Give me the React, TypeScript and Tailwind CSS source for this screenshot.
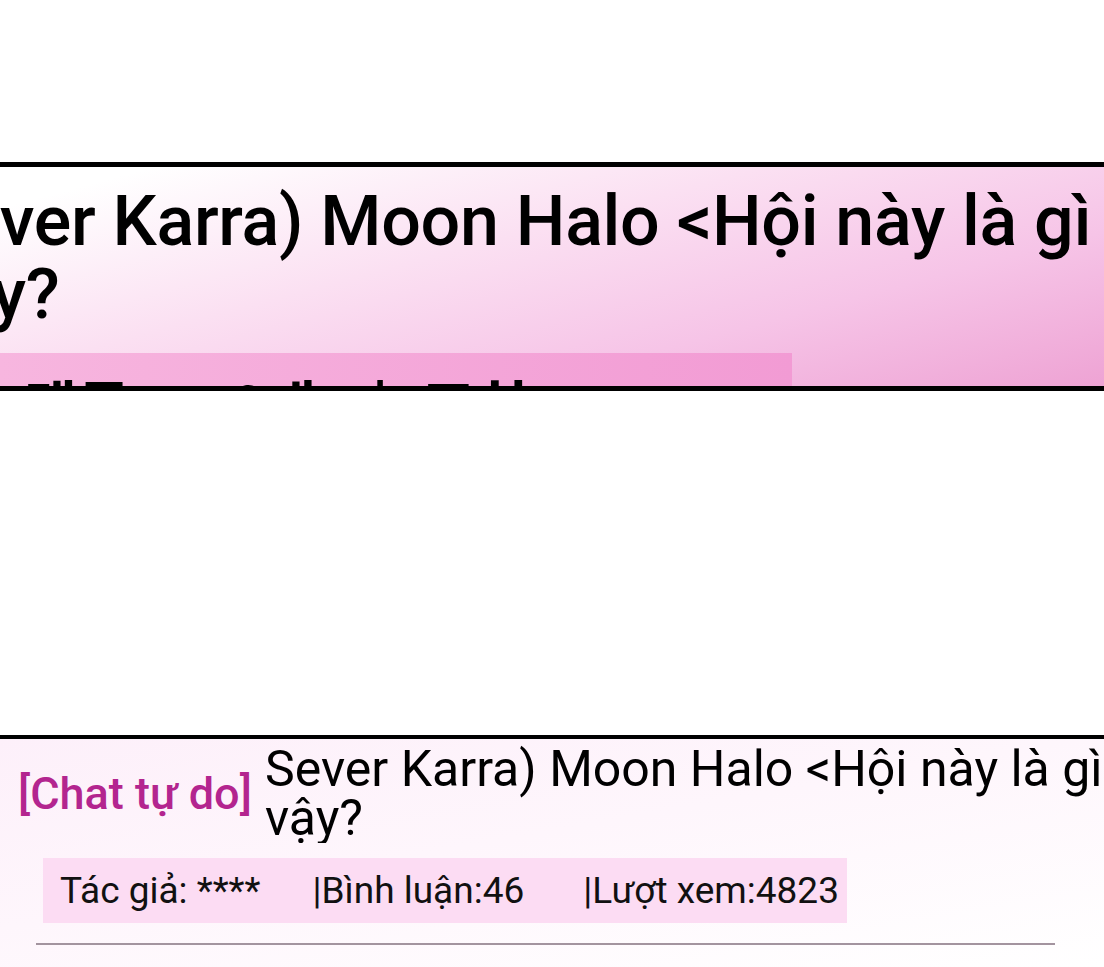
import React from 'react'

const stats = [
  { label: 'Tác giả: ****', className: '' },
  { label: '|Bình luận:46', className: 'ml-[52px]' },
  { label: '|Lượt xem:4823', className: 'ml-[59px]' },
]

const Banner: React.FC = () => (
  <div className="w-full overflow-hidden border-y-[5px] border-black bg-[linear-gradient(165deg,#ffffff_8%,#fbe0f2_40%,#f6c4e7_70%,#eea3d4_100%)]">
    <div className="h-[219px] flex flex-col">
      <div className="pt-[18px] ml-[-79px] w-[1215px] text-[70px] leading-[73px] font-medium tracking-[-0.3px] text-black">
        Sever Karra) Moon Halo &lt;Hội này là gì vậy?
      </div>
      {/* clipped korean row peeking under the title */}
      <div className="mt-auto h-[33px] w-[792px] overflow-hidden bg-[linear-gradient(90deg,#f7b6df,#f29bd4)]">
        <div className="flex pt-[22px] text-[58px] leading-[58px] font-bold text-black font-['Noto_Sans_CJK_KR',sans-serif] whitespace-nowrap">
          <span className="ml-[24px]">댓글</span>
          <span className="ml-[64px]">46개</span>
          <span className="ml-[55px]">|</span>
          <span className="ml-[33px]">조회</span>
          <span className="ml-[66px]">4823</span>
        </div>
      </div>
    </div>
  </div>
)

const PostItem: React.FC = () => (
  <div className="border-t-4 border-black bg-[linear-gradient(170deg,#fdf0fa_0%,#fef6fc_45%,#ffffff_100%)] pb-[22px]">
    <div className="flex items-center pt-[6px]">
      <div className="pl-[18px] w-[265px] text-[45px] leading-[50px] font-medium text-[#b3258f] whitespace-nowrap">
        [Chat tự do]
      </div>
      <div className="flex-1 overflow-hidden text-[50px] leading-[49px] text-black whitespace-nowrap">
        <div>Sever Karra) Moon Halo &lt;Hội này là gì</div>
        <div>vậy?</div>
      </div>
    </div>
    <div className="mt-[15px] ml-[43px] flex h-[65px] w-[804px] items-center bg-[#fcdcf3] pl-[17px] text-[37px] text-[#111]">
      {stats.map((s) => (
        <span key={s.label} className={s.className}>
          {s.label}
        </span>
      ))}
    </div>
    <div className="mt-[20px] ml-[36px] h-[2px] w-[1019px] bg-[#a3949f]" />
  </div>
)

export default function App() {
  return (
    <div className="w-[1104px] h-[967px] overflow-hidden bg-white font-['Roboto','Noto_Sans',sans-serif]">
      <div className="h-[162px]" />
      <Banner />
      <div className="h-[344px]" />
      <PostItem />
    </div>
  )
}
